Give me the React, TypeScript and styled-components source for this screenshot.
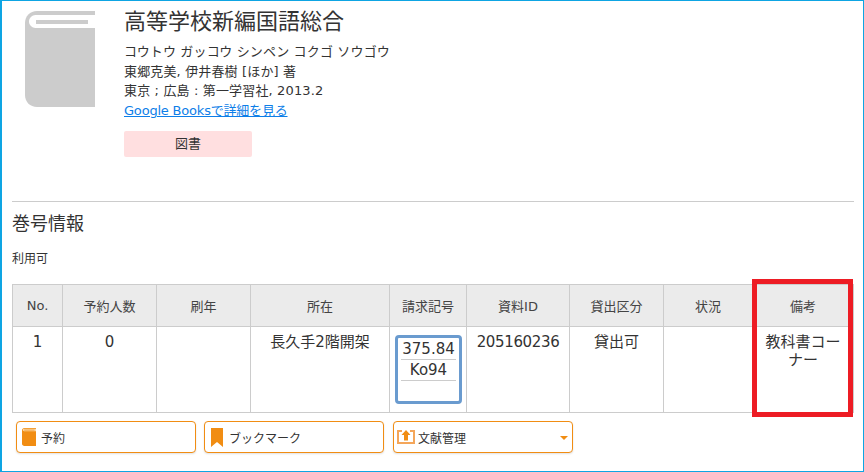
import styled, { createGlobalStyle } from "styled-components";

const GlobalStyle = createGlobalStyle`
  html, body {
    margin: 0;
    padding: 0;
    background: #fff;
  }
  body {
    font-family: "DejaVu Sans", "Noto Sans CJK JP", sans-serif;
    color: #333;
  }
`;

const columns = [
  { label: "No.", width: 50, value: "1" },
  { label: "予約人数", width: 94, value: "0" },
  { label: "刷年", width: 94, value: "" },
  { label: "所在", width: 139, value: "長久手2階開架" },
  { label: "請求記号", width: 77, value: "" },
  { label: "資料ID", width: 103, value: "205160236" },
  { label: "貸出区分", width: 94, value: "貸出可" },
  { label: "状況", width: 89, value: "" },
  { label: "備考", width: 101, value: "教科書コーナー" },
];

const BookIcon = ({ width, height, color, band }: { width: number; height: number; color: string; band: string }) => (
  <svg width={width} height={height} viewBox="0 0 70 96" preserveAspectRatio="none">
    <path d="M12 0H70V96H12C5 96 0 91 0 84V12C0 5 5 0 12 0Z" fill={color} />
    <path d="M10.500 4H70V17H10.500C7 17 4 14 4 10.500C4 7 7 4 10.500 4Z" fill={band} />
    <rect x="11" y="9" width="52" height="4" fill={color} />
  </svg>
);

const App = () => {
  return (
    <>
      <GlobalStyle />
      <Frame>
        <Record>
          <Cover>
            <BookIcon width={70} height={96} color="#cccccc" band="#ffffff" />
          </Cover>
          <Info>
            <Title>高等学校新編国語総合</Title>
            <Kana>コウトウ ガッコウ シンペン コクゴ ソウゴウ</Kana>
            <Line>東郷克美, 伊井春樹 [ほか] 著</Line>
            <Line>東京 ; 広島 : 第一学習社, 2013.2</Line>
            <BookLink href="#">Google Booksで詳細を見る</BookLink>
            <Badge>図書</Badge>
          </Info>
        </Record>
        <Divider />
        <Heading>巻号情報</Heading>
        <Status>利用可</Status>
        <TableWrap>
          <Table>
            <colgroup>
              {columns.map((c) => (
                <col key={c.label} width={c.width} />
              ))}
            </colgroup>
            <thead>
              <tr>
                {columns.map((c) => (
                  <HeadCell key={c.label}>{c.label}</HeadCell>
                ))}
              </tr>
            </thead>
            <tbody>
              <tr>
                {columns.map((c) =>
                  c.label === "請求記号" ? (
                    <CallCell key={c.label}>
                      <CallBox>
                        <CallLine>375.84</CallLine>
                        <CallLine>Ko94</CallLine>
                      </CallBox>
                    </CallCell>
                  ) : (
                    <BodyCell key={c.label} $tight={c.label === "資料ID"}>
                      {c.value}
                    </BodyCell>
                  )
                )}
              </tr>
            </tbody>
          </Table>
          <Highlight />
        </TableWrap>
        <Actions>
          <ActionButton>
            <IconSlot>
              <BookIcon width={14} height={18} color="#f18d13" band="#fbd9a8" />
            </IconSlot>
            予約
          </ActionButton>
          <ActionButton>
            <IconSlot>
              <svg width="12" height="19" viewBox="0 0 12 19">
                <path d="M0 0H12V19L6 14L0 19Z" fill="#f18d13" />
              </svg>
            </IconSlot>
            ブックマーク
          </ActionButton>
          <ActionButton>
            <IconSlot>
              <svg width="18" height="14" viewBox="0 0 18 14">
                <path d="M5 1H1V13H17V1H13" fill="none" stroke="#f4a65a" strokeWidth="2" />
                <path d="M9 0L13.500 5H11V10.500H7V5H4.500Z" fill="#f18d13" />
              </svg>
            </IconSlot>
            文献管理
            <Caret />
          </ActionButton>
        </Actions>
      </Frame>
    </>
  );
};

export default App;

// style
const Frame = styled.div`
  box-sizing: border-box;
  width: 864px;
  height: 472px;
  overflow: hidden;
  border: 1px solid #0ea5e3;
  border-left-width: 2px;
  padding: 0 9px 0 10px;
`;
const Record = styled.div`
  display: flex;
  height: 200px;
  padding-top: 10px;
  box-sizing: border-box;
`;
const Cover = styled.div`
  width: 112px;
  padding-left: 13px;
  box-sizing: border-box;
  line-height: 0;
`;
const Info = styled.div`
  display: flex;
  flex-direction: column;
  align-items: flex-start;
  letter-spacing: 0.15px;
`;
const Title = styled.h1`
  margin: -1px 0 0;
  font-size: 22px;
  font-weight: 400;
  line-height: 24px;
  letter-spacing: 0;
  color: #333;
`;
const Kana = styled.div`
  margin-top: 8px;
  font-size: 13px;
  line-height: 20px;
`;
const Line = styled.div`
  font-size: 13px;
  line-height: 19px;
`;
const BookLink = styled.a`
  margin-top: 1px;
  font-size: 13px;
  line-height: 20px;
  color: #0d7ee8;
  letter-spacing: -0.2px;
`;
const Badge = styled.div`
  width: 128px;
  height: 26px;
  margin-top: 10px;
  background: #ffdfe0;
  border-radius: 2px;
  font-size: 13px;
  line-height: 26px;
  letter-spacing: 0;
  text-align: center;
`;
const Divider = styled.hr`
  margin: 0;
  border: 0;
  border-top: 1px solid #ccc;
`;
const Heading = styled.h2`
  margin: 10px 0 0;
  font-size: 18px;
  font-weight: 400;
  line-height: 24px;
`;
const Status = styled.div`
  margin-top: 15px;
  font-size: 12px;
  line-height: 16px;
`;
const TableWrap = styled.div`
  position: relative;
  margin-top: 17px;
  width: 841px;
`;
const Table = styled.table`
  table-layout: fixed;
  width: 841px;
  border-collapse: collapse;
`;
const HeadCell = styled.th`
  height: 41px;
  padding: 0;
  border: 1px solid #ccc;
  background: #ebebeb;
  font-size: 13px;
  font-weight: 400;
  text-align: center;
  vertical-align: middle;
  color: #444;
`;
const BodyCell = styled.td<{ $tight?: boolean }>`
  height: 86px;
  padding: 6px 8px;
  box-sizing: border-box;
  border: 1px solid #ccc;
  font-size: 15px;
  line-height: 18px;
  letter-spacing: ${(p) => (p.$tight ? "-0.35px" : "0")};
  text-align: center;
  vertical-align: top;
`;
const CallCell = styled(BodyCell)`
  padding: 8px 4px 0 5px;
`;
const CallBox = styled.div`
  box-sizing: border-box;
  height: 69px;
  padding: 1px 3px 0;
  border: 3px solid #6a9bcf;
  border-radius: 4px;
`;
const CallLine = styled.div`
  height: 20px;
  border-bottom: 1px solid #ccc;
  line-height: 20px;
  white-space: nowrap;
`;
const Highlight = styled.div`
  position: absolute;
  top: -5px;
  right: 0;
  width: 101px;
  height: 138px;
  box-sizing: border-box;
  border: 5px solid #ed1c24;
`;
const Actions = styled.div`
  display: flex;
  gap: 8px;
  margin: 8px 0 0 4px;
`;
const ActionButton = styled.div`
  position: relative;
  display: flex;
  align-items: center;
  box-sizing: border-box;
  width: 180px;
  height: 32px;
  padding: 0 2px;
  background: #fff;
  border: 1px solid #f18d13;
  border-radius: 4px;
  box-shadow: 0 1px 2px rgba(0, 0, 0, 0.12);
  font-size: 12px;
  color: #333;
  &:last-child {
    margin-left: 1px;
  }
`;
const IconSlot = styled.span`
  display: flex;
  justify-content: center;
  width: 20px;
  margin-right: 2px;
`;
const Caret = styled.span`
  position: absolute;
  right: 4px;
  top: 14px;
  border-style: solid;
  border-width: 4px 4px 0;
  border-color: #f18d13 transparent transparent;
`;
